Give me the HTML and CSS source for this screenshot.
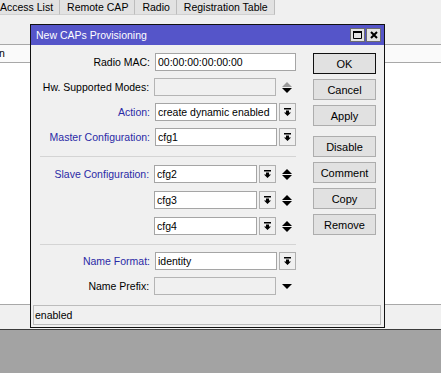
FILE: index.html
```html
<!DOCTYPE html>
<html lang="en">
<head>
  <meta charset="UTF-8">
  <title>New CAPs Provisioning</title>
  <link rel="stylesheet" href="styles.css">
</head>
<body>
  <div class="app">
    <div class="tabs">
      <span class="tab first">Access List</span>
      <span class="tab">Remote CAP</span>
      <span class="tab">Radio</span>
      <span class="tab">Registration Table</span>
    </div>
    <div class="toolbar"></div>
    <div class="list-head"><span class="col">n</span></div>
    <div class="list-body"></div>
    <div class="app-status"></div>
  </div>

  <div class="dialog">
    <div class="titlebar">
      <span class="title">New CAPs Provisioning</span>
      <span class="winbtn">
        <svg width="9" height="8" viewBox="0 0 9 8"><path d="M0.5 0.5h8v7h-8z" fill="none" stroke="#000"/><rect x="0" y="0" width="9" height="2"/></svg>
      </span>
      <span class="winbtn">
        <svg width="8" height="8" viewBox="0 0 8 8"><path d="M1 1l6 6M7 1l-6 6" stroke="#000" stroke-width="2"/></svg>
      </span>
    </div>

    <div class="content">
      <div class="form">
        <div class="row">
          <label class="label">Radio MAC:</label>
          <div class="field"><span class="input">00:00:00:00:00:00</span></div>
        </div>
        <div class="row">
          <label class="label">Hw. Supported Modes:</label>
          <div class="field short"><span class="input off"></span></div>
          <span class="spin">
            <svg width="10" height="11" viewBox="0 0 10 11"><path d="M5 0 10 5H0z" fill="#9a9a9a"/><path d="M0 6h10L5 11z"/></svg>
          </span>
        </div>
        <div class="row">
          <label class="label blue">Action:</label>
          <div class="field"><span class="input">create dynamic enabled</span><span class="dd"><svg width="7" height="8" viewBox="0 0 7 8"><rect width="7" height="1.5"/><path d="M2 2.5h3v2h2L3.5 8 0 4.5h2z"/></svg></span></div>
        </div>
        <div class="row">
          <label class="label blue">Master Configuration:</label>
          <div class="field"><span class="input">cfg1</span><span class="dd"><svg width="7" height="8" viewBox="0 0 7 8"><rect width="7" height="1.5"/><path d="M2 2.5h3v2h2L3.5 8 0 4.5h2z"/></svg></span></div>
        </div>

        <div class="sep top"></div>

        <div class="row wide">
          <label class="label blue">Slave Configuration:</label>
          <div class="field short"><span class="input">cfg2</span><span class="dd"><svg width="7" height="8" viewBox="0 0 7 8"><rect width="7" height="1.5"/><path d="M2 2.5h3v2h2L3.5 8 0 4.5h2z"/></svg></span></div>
          <span class="spin">
            <svg width="10" height="11" viewBox="0 0 10 11"><path d="M5 0 10 5H0z"/><path d="M0 6h10L5 11z"/></svg>
          </span>
        </div>
        <div class="row wide">
          <label class="label"></label>
          <div class="field short"><span class="input">cfg3</span><span class="dd"><svg width="7" height="8" viewBox="0 0 7 8"><rect width="7" height="1.5"/><path d="M2 2.5h3v2h2L3.5 8 0 4.5h2z"/></svg></span></div>
          <span class="spin">
            <svg width="10" height="11" viewBox="0 0 10 11"><path d="M5 0 10 5H0z"/><path d="M0 6h10L5 11z"/></svg>
          </span>
        </div>
        <div class="row wide">
          <label class="label"></label>
          <div class="field short"><span class="input">cfg4</span><span class="dd"><svg width="7" height="8" viewBox="0 0 7 8"><rect width="7" height="1.5"/><path d="M2 2.5h3v2h2L3.5 8 0 4.5h2z"/></svg></span></div>
          <span class="spin">
            <svg width="10" height="11" viewBox="0 0 10 11"><path d="M5 0 10 5H0z"/><path d="M0 6h10L5 11z"/></svg>
          </span>
        </div>

        <div class="sep bottom"></div>

        <div class="row">
          <label class="label blue">Name Format:</label>
          <div class="field"><span class="input">identity</span><span class="dd"><svg width="7" height="8" viewBox="0 0 7 8"><rect width="7" height="1.5"/><path d="M2 2.5h3v2h2L3.5 8 0 4.5h2z"/></svg></span></div>
        </div>
        <div class="row">
          <label class="label">Name Prefix:</label>
          <div class="field short"><span class="input off"></span></div>
          <span class="spin">
            <svg width="10" height="5" viewBox="0 0 10 5"><path d="M0 0h10L5 5z"/></svg>
          </span>
        </div>
      </div>

      <div class="buttons">
        <button class="btn default">OK</button>
        <button class="btn">Cancel</button>
        <button class="btn">Apply</button>
        <button class="btn gap">Disable</button>
        <button class="btn">Comment</button>
        <button class="btn">Copy</button>
        <button class="btn">Remove</button>
      </div>
    </div>

    <div class="status">enabled</div>
  </div>
</body>
</html>
```

FILE: styles.css
```css
* {
  box-sizing: border-box;
}
body {
  margin: 0;
  width: 441px;
  height: 373px;
  overflow: hidden;
  position: relative;
  font-family: "Liberation Sans", Arial, sans-serif;
  font-size: 10.5px;
  color: #000;
  background: #a3a3a3;
}

/* background window */
.app {
  height: 330px;
  display: flex;
  flex-direction: column;
  background: #fff;
  border-bottom: 1px solid #3c3c3c;
}
.tabs {
  display: flex;
  height: 15px;
  background: #f0f0f0;
}
.tab {
  padding: 0 6px 0 7px;
  line-height: 14px;
  background: #e2e2e2;
  border-right: 1px solid #bdbdbd;
  border-bottom: 1px solid #d0d0d0;
}
.tab.first {
  padding-left: 0;
}
.toolbar {
  height: 30px;
  background: #f0f0f0;
  border-bottom: 1px solid #a8a8a8;
}
.list-head {
  height: 18px;
  border-bottom: 1px solid #a8a8a8;
  background: #fafafa;
  line-height: 17px;
}
.list-head .col {
  margin-left: -1px;
}
.list-body {
  flex: 1;
}
.app-status {
  height: 25px;
  background: #f0f0f0;
  border-top: 1px solid #a8a8a8;
}

/* dialog window */
.dialog {
  position: absolute;
  left: 30px;
  top: 24px;
  width: 355px;
  height: 304px;
  border: 1px solid #111;
  background: #f0f0f0;
  display: flex;
  flex-direction: column;
}
.titlebar {
  height: 20px;
  background: #5555c9;
  color: #fff;
  display: flex;
  align-items: center;
  padding: 0 3px 0 5px;
}
.title {
  flex: 1;
}
.winbtn {
  width: 15px;
  height: 14px;
  margin-left: 1px;
  background: #e4e4e4;
  border: 1px solid #6d6d6d;
  display: flex;
  align-items: center;
  justify-content: center;
}

.content {
  flex: 1;
  display: flex;
  padding: 8px 7px 0 0;
}
.form {
  width: 265px;
  display: flex;
  flex-direction: column;
}
.row {
  display: flex;
  align-items: center;
  height: 18px;
  margin-bottom: 7px;
}
.row.wide {
  margin-bottom: 8px;
}
.label {
  width: 119px;
  margin-right: 5px;
  text-align: right;
  white-space: nowrap;
}
.label.blue {
  color: #2a2aa6;
}
.field {
  width: 141px;
  height: 18px;
  display: flex;
}
.field.short {
  width: 123px;
}
.input {
  flex: 1;
  height: 18px;
  background: #fff;
  border: 1px solid #a5a5a5;
  padding: 0 2px;
  line-height: 16px;
  white-space: nowrap;
  overflow: hidden;
}
.input.off {
  background: #f0f0f0;
  border-color: #b4b4b4;
}
.dd {
  width: 17px;
  height: 18px;
  margin-left: 2px;
  border: 1px solid #b0b0b0;
  background: #f0f0f0;
  display: flex;
  align-items: center;
  justify-content: center;
}
.spin {
  width: 20px;
  display: flex;
  justify-content: center;
  padding-left: 2px;
}
.sep {
  height: 1px;
  margin-left: 9px;
  background: #d4d4d4;
}
.sep.top {
  margin-top: 3px;
  margin-bottom: 8px;
}
.sep.bottom {
  margin-top: 1px;
  margin-bottom: 7px;
}

.buttons {
  width: 63px;
  margin-left: 17px;
  display: flex;
  flex-direction: column;
  gap: 5px;
}
.btn {
  height: 21px;
  padding: 0;
  font: inherit;
  font-size: 11px;
  color: #000;
  background: #e1e1e1;
  border: 1px solid #adadad;
  border-radius: 0;
}
.btn.default {
  border-color: #111;
}
.btn.gap {
  margin-top: 5px;
}

.status {
  height: 20px;
  margin: 0 3px 2px 2px;
  padding-left: 1px;
  border: 1px solid #bcbcbc;
  line-height: 18px;
}
```
